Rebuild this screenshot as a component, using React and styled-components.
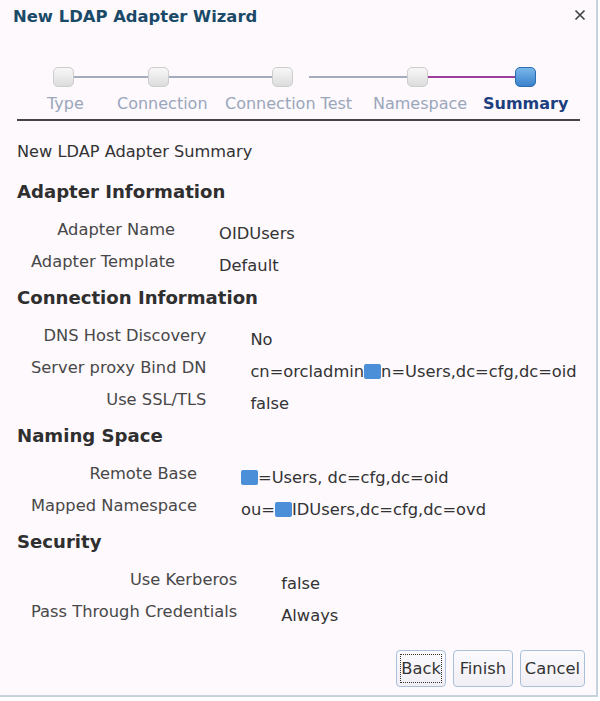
import React from "react";
import styled, { createGlobalStyle } from "styled-components";

const GlobalStyle = createGlobalStyle`
  body {
    margin: 0;
    background: #ffffff;
    font-family: "DejaVu Sans", "Liberation Sans", sans-serif;
  }
`;

const Dialog = styled.div`
  width: 596px;
  height: 695px;
  background: #fdf9fd;
  border-right: 2px solid #c8d2df;
  border-bottom: 2px solid #c8d2df;
  display: flex;
  flex-direction: column;
`;

const Header = styled.div`
  display: flex;
  align-items: center;
  justify-content: space-between;
  height: 24px;
  margin-top: 5px;
  padding: 0 10px 0 13px;
`;

const Title = styled.h1`
  margin: 0;
  font-size: 16.4px;
  font-weight: bold;
  line-height: 24px;
  color: #1b4a68;
`;

const CloseButton = styled.button`
  border: none;
  background: none;
  padding: 0;
  width: 12px;
  height: 12px;
  margin-top: -4px;
  display: flex;
  cursor: pointer;
`;

const Stepper = styled.div`
  margin: 38px 16px 0 17px;
  border-bottom: 2px solid #444444;
  padding-bottom: 5px;
`;

const Track = styled.div`
  display: flex;
  align-items: center;
  height: 20px;
  padding-left: 36px;
`;

const Dot = styled.div`
  width: 21px;
  height: 20px;
  box-sizing: border-box;
  border-radius: 5px;
  flex-shrink: 0;
  border: 1px solid ${(p) => (p.$active ? "#2c6cb0" : "#cdcdcd")};
  background: ${(p) =>
    p.$active
      ? "linear-gradient(#7ab6ea, #3a82cc)"
      : "linear-gradient(#f7f7f7, #dcdcdc)"};
`;

const Connector = styled.div`
  height: 2px;
  flex-shrink: 0;
  width: ${(p) => p.$w}px;
  margin-left: ${(p) => p.$gap || 0}px;
  background: ${(p) => (p.$active ? "#9a3f9e" : "#a3abbd")};
`;

const Labels = styled.div`
  display: grid;
  grid-template-columns: 70px 108px 148px 110px auto;
  padding-left: 30px;
  margin-top: 7px;
`;

const StepLabel = styled.span`
  font-size: 16px;
  line-height: 20px;
  white-space: nowrap;
  font-weight: ${(p) => (p.$active ? "bold" : "normal")};
  color: ${(p) => (p.$active ? "#1d3f7f" : "#9aa6bb")};
`;

const Body = styled.div`
  padding: 0 0 0 17px;
  flex: 1;
`;

const Intro = styled.p`
  margin: 19px 0 0;
  font-size: 16.2px;
  line-height: 24px;
  color: #333333;
`;

const SectionTitle = styled.h2`
  margin: ${(p) => (p.$first ? "16px" : "8px")} 0 0;
  font-size: 18.1px;
  line-height: 24px;
  font-weight: bold;
  color: #2f2f2f;
`;

const FormGrid = styled.div`
  display: grid;
  grid-template-columns: auto 1fr;
  grid-auto-rows: 32px;
  column-gap: 44px;
  margin-top: 10px;
  padding-left: 14px;
`;

const Label = styled.div`
  font-size: 16.3px;
  line-height: 32px;
  text-align: right;
  white-space: nowrap;
  color: #484848;
`;

const Value = styled.div`
  font-size: 16.3px;
  line-height: 25px;
  padding-top: 7px;
  white-space: nowrap;
  color: #333333;
`;

const Redact = styled.span`
  display: inline-block;
  width: ${(p) => p.$w}px;
  height: 15px;
  vertical-align: -2px;
  background: #4b8fd9;
  border-radius: 2px;
`;

const Footer = styled.div`
  display: flex;
  justify-content: flex-end;
  gap: 7px;
  padding: 0 11px 8px 0;
`;

const Button = styled.button`
  height: 37px;
  padding: 0 4px;
  min-width: ${(p) => p.$w}px;
  font-family: "DejaVu Sans", "Liberation Sans", sans-serif;
  font-size: 16.3px;
  color: #333333;
  background: linear-gradient(#fbfafd, #f1eff5);
  border: 1px solid #a9c0dc;
  border-radius: 4px;
  cursor: pointer;
  outline: ${(p) => (p.$focused ? "1px dotted #333" : "none")};
  outline-offset: -5px;
`;

const steps = ["Type", "Connection", "Connection Test", "Namespace", "Summary"];

const sections = [
  {
    title: "Adapter Information",
    rows: [
      ["Adapter Name", "OIDUsers"],
      ["Adapter Template", "Default"],
    ],
  },
  {
    title: "Connection Information",
    rows: [
      ["DNS Host Discovery", "No"],
      [
        "Server proxy Bind DN",
        <>
          cn=orcladmin<Redact $w={17} />n=Users,dc=cfg,dc=oid
        </>,
      ],
      ["Use SSL/TLS", "false"],
    ],
  },
  {
    title: "Naming Space",
    rows: [
      [
        "Remote Base",
        <>
          <Redact $w={17} />=Users, dc=cfg,dc=oid
        </>,
      ],
      [
        "Mapped Namespace",
        <>
          ou=<Redact $w={17} />IDUsers,dc=cfg,dc=ovd
        </>,
      ],
    ],
  },
  {
    title: "Security",
    rows: [
      ["Use Kerberos", "false"],
      ["Pass Through Credentials", "Always"],
    ],
  },
];

export default function App() {
  return (
    <>
      <GlobalStyle />
      <Dialog>
        <Header>
          <Title>New LDAP Adapter Wizard</Title>
          <CloseButton aria-label="Close">
            <svg width="12" height="12" viewBox="0 0 12 12">
              <path
                d="M1.5 1.5 L10.5 10.5 M10.5 1.5 L1.5 10.5"
                stroke="#444444"
                strokeWidth="1.7"
              />
            </svg>
          </CloseButton>
        </Header>

        <Stepper>
          <Track>
            <Dot />
            <Connector $w={74} />
            <Dot />
            <Connector $w={103} />
            <Dot />
            <Connector $w={98} $gap={16} />
            <Dot />
            <Connector $w={87} $active />
            <Dot $active />
          </Track>
          <Labels>
            {steps.map((s, i) => (
              <StepLabel key={s} $active={i === steps.length - 1}>
                {s}
              </StepLabel>
            ))}
          </Labels>
        </Stepper>

        <Body>
          <Intro>New LDAP Adapter Summary</Intro>
          {sections.map((sec, i) => (
            <React.Fragment key={sec.title}>
              <SectionTitle $first={i === 0}>{sec.title}</SectionTitle>
              <FormGrid>
                {sec.rows.map(([label, value]) => (
                  <React.Fragment key={label}>
                    <Label>{label}</Label>
                    <Value>{value}</Value>
                  </React.Fragment>
                ))}
              </FormGrid>
            </React.Fragment>
          ))}
        </Body>

        <Footer>
          <Button $w={49} $focused>
            Back
          </Button>
          <Button $w={60}>Finish</Button>
          <Button $w={65}>Cancel</Button>
        </Footer>
      </Dialog>
    </>
  );
}
